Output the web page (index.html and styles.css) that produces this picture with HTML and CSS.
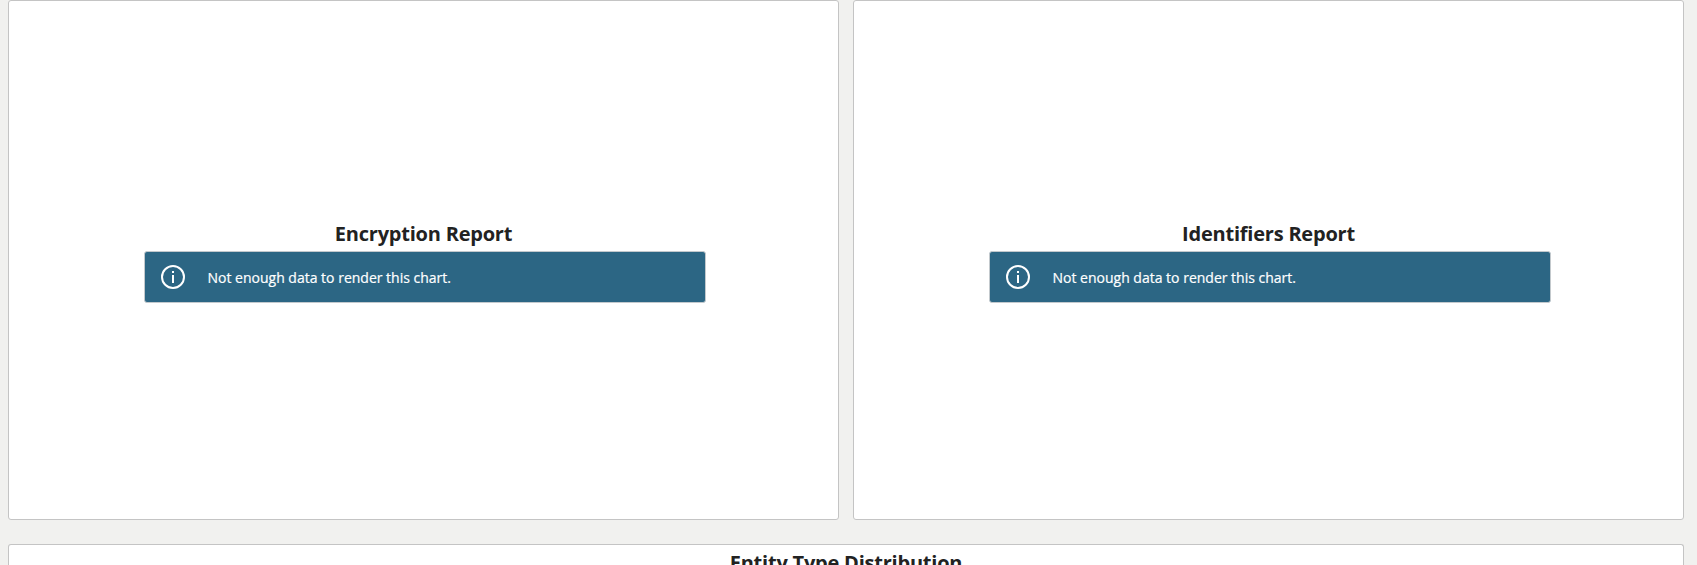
FILE: index.html
```html
<!DOCTYPE html>
<html lang="en">
<head>
<meta charset="utf-8">
<title>Reports</title>
<link rel="stylesheet" href="styles.css">
</head>
<body>
<main class="dashboard">
  <section class="card">
    <h2 class="title">Encryption Report</h2>
    <div class="alert">
      <svg class="icon" viewBox="0 0 24 24"><circle class="ring" cx="12" cy="12" r="11"/><path d="M11 10h2v8h-2zM11 6h2v2h-2z"/></svg>
      <span>Not enough data to render this chart.</span>
    </div>
  </section>
  <section class="card">
    <h2 class="title">Identifiers Report</h2>
    <div class="alert">
      <svg class="icon" viewBox="0 0 24 24"><circle class="ring" cx="12" cy="12" r="11"/><path d="M11 10h2v8h-2zM11 6h2v2h-2z"/></svg>
      <span>Not enough data to render this chart.</span>
    </div>
  </section>
  <section class="card wide">
    <h2 class="title">Entity Type Distribution</h2>
  </section>
</main>
</body>
</html>
```
FILE: styles.css
```css
* { box-sizing: border-box; }
body { margin: 0; height: 565px; overflow: hidden; background: #f1f1ef; font-family: "Open Sans", sans-serif; color: #222; }
.dashboard { display: grid; grid-template-columns: 831px 831px; grid-template-rows: 520px 21px; gap: 24px 14px; padding-left: 8px; }
.card { display: flex; flex-direction: column; align-items: center; padding-top: 218px; background: #fff; border: 1px solid #c4c4c4; border-radius: 3px; }
.wide { grid-column: 1 / 3; padding-top: 3px; border-bottom: 0; border-radius: 3px 3px 0 0; overflow: hidden; }
.title { margin: 0; font-size: 20px; line-height: 30px; font-weight: 700; letter-spacing: -0.22px; flex: none; }
.alert { display: flex; align-items: center; gap: 22.5px; width: 562px; height: 52px; margin: 2px 0 0 3px; padding: 0 0 0 16px; border: 1px solid #c3c9cd; border-radius: 3px; background: #2c6684; color: #fff; font-size: 14px; -webkit-text-stroke: 0.2px #fff; }
.alert span { padding-top: 1px; }
.icon { width: 24px; height: 24px; fill: #fff; }
.ring { fill: none; stroke: #fff; stroke-width: 2; }
```
